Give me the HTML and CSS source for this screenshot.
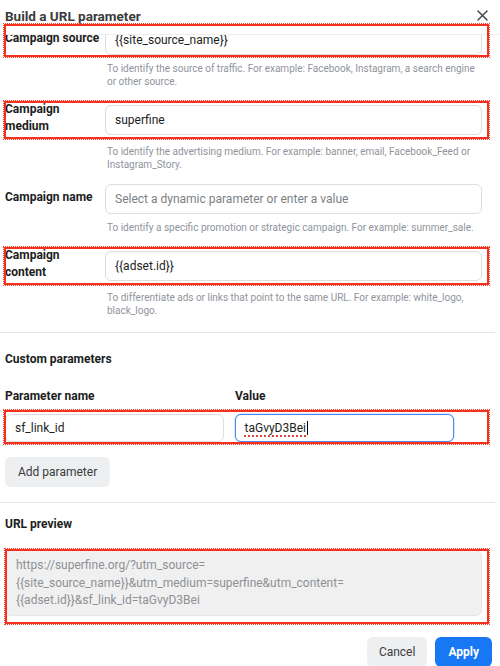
FILE: index.html
```html
<!DOCTYPE html>
<html lang="en">
<head>
<meta charset="utf-8">
<title>Build a URL parameter</title>
<link rel="stylesheet" href="styles.css">
</head>
<body>
<div class="dialog">
  <header class="header">
    <h1 class="title">Build a URL parameter</h1>
    <button class="close" aria-label="Close">
      <svg width="11" height="11" viewBox="0 0 11 11"><path d="M1 1 L10 10 M10 1 L1 10" stroke="#444950" stroke-width="1.5" fill="none" stroke-linecap="round"/></svg>
    </button>
  </header>

  <div class="form">
    <div class="field">
      <div class="row marked m1">
        <label class="label">Campaign source</label>
        <div class="input">{{site_source_name}}</div>
      </div>
      <p class="help">To identify the source of traffic. For example: Facebook, Instagram, a search engine or other source.</p>
    </div>

    <div class="field">
      <div class="row marked m2">
        <label class="label">Campaign medium</label>
        <div class="input">superfine</div>
      </div>
      <p class="help">To identify the advertising medium. For example: banner, email, Facebook_Feed or Instagram_Story.</p>
    </div>

    <div class="field">
      <div class="row">
        <label class="label">Campaign name</label>
        <div class="input placeholder">Select a dynamic parameter or enter a value</div>
      </div>
      <p class="help">To identify a specific promotion or strategic campaign. For example: summer_sale.</p>
    </div>

    <div class="field last">
      <div class="row marked m2">
        <label class="label">Campaign content</label>
        <div class="input">{{adset.id}}</div>
      </div>
      <p class="help">To differentiate ads or links that point to the same URL. For example: white_logo, black_logo.</p>
    </div>

    <hr class="divider">

    <section class="section custom">
      <h2 class="section-title">Custom parameters</h2>
      <div class="param-grid param-head">
        <span class="col-title">Parameter name</span>
        <span class="col-title">Value</span>
      </div>
      <div class="param-grid param-row marked m3">
        <div class="input small">sf_link_id</div>
        <div class="input small focused"><span class="spell">taGvyD3Bei</span><span class="caret"></span></div>
      </div>
      <button class="btn btn-gray add">Add parameter</button>
    </section>

    <hr class="divider">

    <section class="section preview-sec">
      <h2 class="section-title">URL preview</h2>
      <div class="preview marked m4">https://superfine.org/?utm_source=<wbr>{{site_source_name}}&amp;utm_medium=superfine&amp;utm_content=<wbr>{{adset.id}}&amp;sf_link_id=taGvyD3Bei</div>
    </section>

    <footer class="footer">
      <button class="btn btn-gray">Cancel</button>
      <button class="btn btn-blue">Apply</button>
    </footer>
  </div>
</div>
</body>
</html>
```

FILE: styles.css
```css
* { box-sizing: border-box; }
html, body { margin: 0; padding: 0; background: #fff; }
body {
  font-family: Roboto, "Liberation Sans", Arial, sans-serif;
  color: #1c1e21;
  width: 500px;
  height: 666px;
  overflow: hidden;
}

.header {
  position: sticky;
  top: 0;
  z-index: 2;
  height: 35px;
  background: #fff;
  border-bottom: 1px solid #ededed;
  display: flex;
  align-items: flex-start;
  justify-content: space-between;
  padding: 7px 12px 0 5px;
}
.title {
  margin: 0;
  font-size: 13.5px;
  line-height: 18px;
  font-weight: 700;
  color: #3a3b3c;
}
.close {
  border: 0;
  background: none;
  padding: 0;
  margin-top: 3px;
  width: 11px;
  height: 11px;
  display: flex;
}

.form { margin-top: -10px; }

.field { padding: 0 18px 13px 5px; }
.field.last { padding-bottom: 15px; }

.row {
  display: grid;
  grid-template-columns: 100px 1fr;
  align-items: center;
}
.label {
  font-size: 12px;
  font-weight: 700;
  line-height: 17px;
  padding-right: 4px;
  padding-bottom: 3px;
}

.input {
  height: 30px;
  border: 1px solid #dadde1;
  border-radius: 6px;
  padding: 0 9px;
  display: flex;
  align-items: center;
  font-size: 12px;
  color: #1c1e21;
  background: #fff;
  white-space: nowrap;
  overflow: hidden;
}
.input.placeholder { color: #7b7f86; }
.input.small { height: 28px; }
.input.focused {
  border: 1.5px solid #4a8ef0;
  box-shadow: 0 0 0 0.5px #a9c8f7;
  padding-left: 8.5px;
}
.spell {
  text-decoration: underline dotted #e0423a;
  text-decoration-thickness: 1.5px;
  text-underline-offset: 3px;
}
.caret {
  display: inline-block;
  width: 1px;
  height: 14px;
  background: #000;
  margin-left: 1px;
}

.help {
  margin: 7px 0 0 102px;
  font-size: 10px;
  line-height: 13px;
  color: #90949c;
}

.divider {
  border: 0;
  border-top: 1px solid #e4e6eb;
  margin: 0 5px 0 0;
}

.section { padding: 18px 18px 15px 5px; }
.section-title {
  margin: 0;
  font-size: 12px;
  font-weight: 700;
  line-height: 16px;
}
.param-grid {
  display: grid;
  grid-template-columns: 1fr 1fr 17px;
  column-gap: 11px;
}
.param-head { margin-top: 21px; }
.col-title {
  font-size: 12px;
  font-weight: 700;
  line-height: 16px;
}
.param-row { margin-top: 10px; }

.btn {
  border: 0;
  border-radius: 6px;
  height: 30px;
  font-family: inherit;
  font-size: 12px;
  padding: 0 12px;
  cursor: pointer;
}
.btn-gray { background: #eeeff1; color: #3a3b3c; }
.btn-blue { background: #1877f2; color: #fff; font-weight: 700; padding: 0 13px; }
.add { margin-top: 15px; padding: 0 13px; display: block; }

.preview-sec { padding-top: 13px; padding-bottom: 0; }
.preview {
  margin-top: 18px;
  background: #f0f0f0;
  border: 1px solid #e6e6e6;
  border-radius: 6px;
  padding: 6px 11px 5px 10px;
  font-size: 12px;
  line-height: 17.5px;
  color: #8e9196;
  min-height: 63px;
}

.footer {
  display: flex;
  justify-content: flex-end;
  gap: 8px;
  padding: 21px 8px 0 0;
}

/* red annotation frames drawn over the marked rows */
.marked { position: relative; }
.marked::after {
  content: "";
  position: absolute;
  z-index: 3;
  border: 2px solid #f5301d;
  outline: 1px dotted #f0432f;
  outline-offset: 0;
  pointer-events: none;
}
.m1::after { top: -1px; right: -7px; bottom: -2px; left: -1px; }
.m2::after { top: 0; right: -7px; bottom: -1px; left: -1px; }
.m3::after { top: -4px; right: -7px; bottom: -2px; left: -1px; }
.m4::after { top: -2px; right: -8px; bottom: -9px; left: -1px; }
```
